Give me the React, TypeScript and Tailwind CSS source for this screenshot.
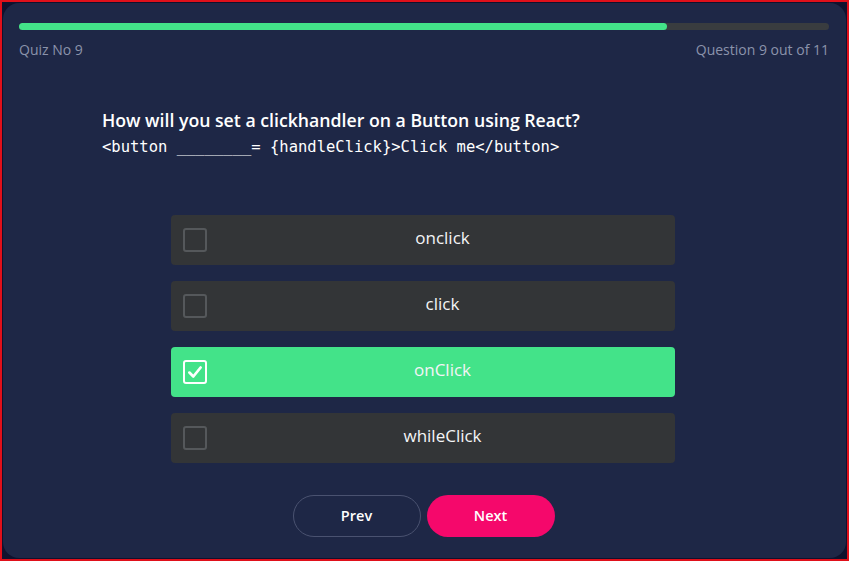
import React from "react";

const options = ["onclick", "click", "onClick", "whileClick"];
const selected = 2;

export default function App() {
  return (
    <div className="w-[849px] h-[561px] border-2 border-[#e0101a] bg-[#10122e] p-px" style={{ fontFamily: '"Open Sans", "Noto Sans", sans-serif' }}>
      <div className="h-full rounded-2xl bg-[#1e2746] flex flex-col pl-[15px] pr-4 pt-5">
        <div className="h-[7px] rounded-full bg-[#393c3f] mx-[1px]">
          <div className="h-full w-[80%] rounded-full bg-[#43e389]" />
        </div>
        <div className="flex justify-between mt-[9px] text-[14px] text-[#8b93ab] px-[1px]">
          <span>Quiz No 9</span>
          <span>Question 9 out of 11</span>
        </div>
        <div className="pl-[84px] mt-[48px]">
          <div className="text-[17.7px] font-semibold text-white leading-[24px]">
            How will you set a clickhandler on a Button using React?
          </div>
          <div className="text-[15.5px] text-white leading-[22px] mt-[4px]" style={{ fontFamily: '"DejaVu Sans Mono", monospace' }}>
            {"<button ________= {handleClick}>Click me</button>"}
          </div>
        </div>
        <div className="flex flex-col items-center gap-4 mt-[57px] mr-[3px]">
          {options.map((o, i) => {
            const sel = i === selected;
            return (
              <div
                key={o}
                className={`w-[504px] h-[50px] rounded-[4px] flex items-center pl-3 ${sel ? "bg-[#43e389]" : "bg-[#333537]"}`}
              >
                <div
                  className={`w-6 h-6 rounded-[3px] flex items-center justify-center ${sel ? "border-[2.5px] border-white" : "border-2 border-[#55585b]"}`}
                >
                  {sel && (
                    <svg width="18" height="18" viewBox="0 0 16 16" fill="none">
                      <path d="M3 8.5 L6.5 12 L13 4" stroke="white" strokeWidth="2.4" strokeLinecap="round" strokeLinejoin="round" />
                    </svg>
                  )}
                </div>
                <div className="flex-1 text-center text-[17px] font-medium text-[#f3f4f6] pl-1 -mt-1">{o}</div>
              </div>
            );
          })}
        </div>
        <div className="flex justify-center gap-[6px] mt-8 mr-[1px]">
          <button className="w-[128px] h-[42px] rounded-full border border-[#4a5270] text-white text-[14.5px] font-semibold">Prev</button>
          <button className="w-[128px] h-[42px] rounded-full bg-[#f5086b] text-white text-[14.5px] font-semibold">Next</button>
        </div>
      </div>
    </div>
  );
}
